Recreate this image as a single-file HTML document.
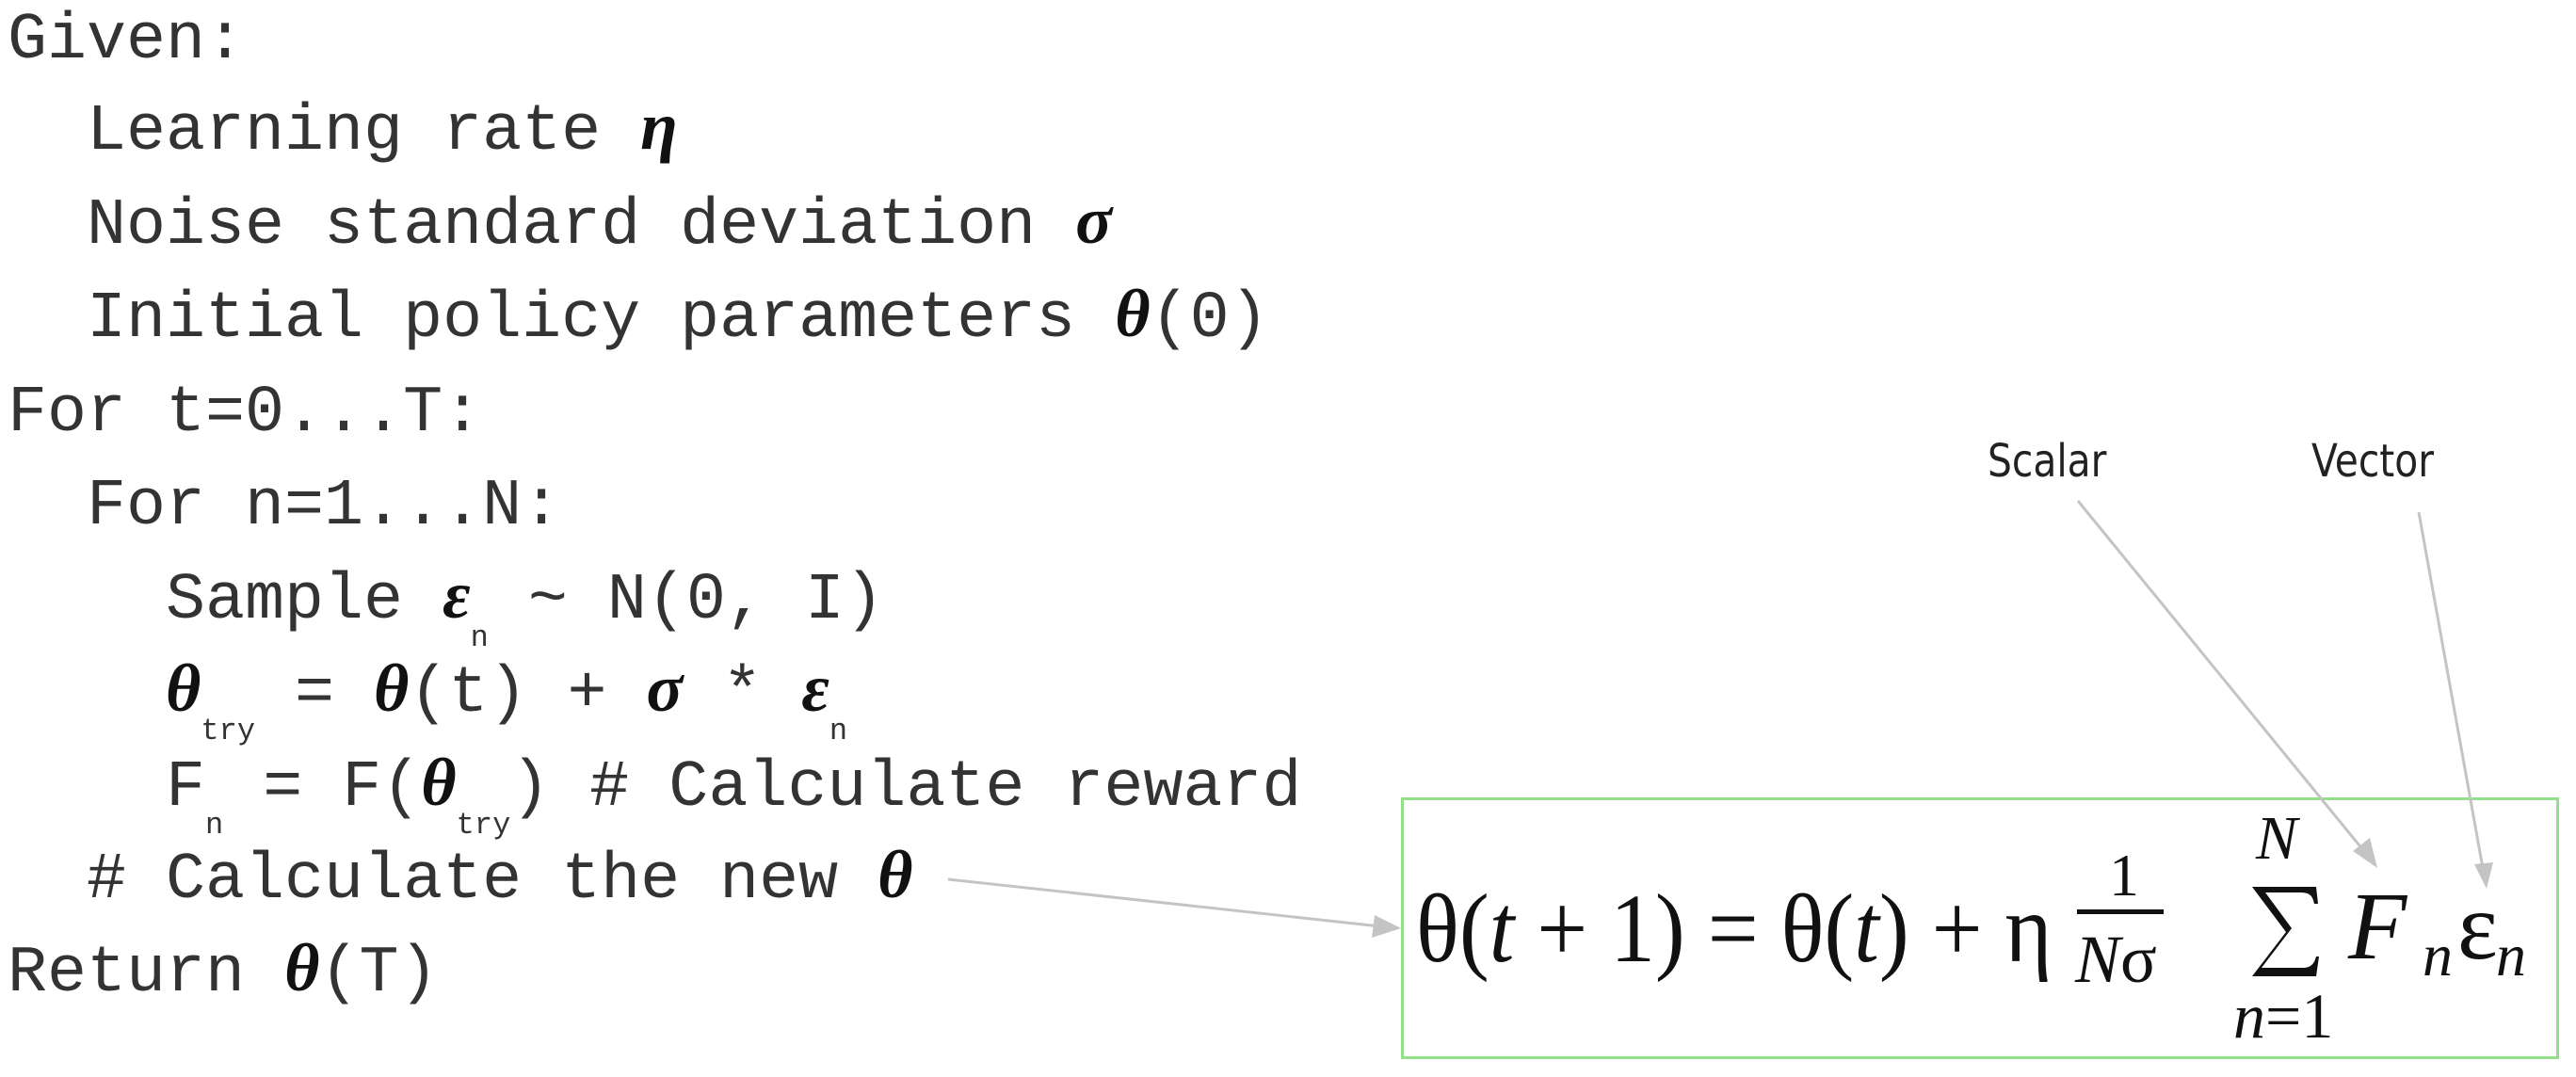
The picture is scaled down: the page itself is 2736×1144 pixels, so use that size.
<!DOCTYPE html>
<html><head><meta charset="utf-8"><style>
html,body{margin:0;padding:0;background:#fff;}
body{width:2736px;height:1144px;position:relative;overflow:hidden;}
.l{position:absolute;font-family:"Liberation Mono",monospace;font-size:70px;line-height:100px;height:100px;color:#333;white-space:pre;}
.g{font-family:"Liberation Serif",serif;font-style:italic;font-weight:bold;font-size:72px;line-height:0;color:#111;}
.s{font-family:"Liberation Mono",monospace;font-size:32px;position:relative;top:30px;line-height:0;}
.box{position:absolute;left:1488px;top:847px;width:1230px;height:278px;border:3px solid #94e08a;box-sizing:border-box;}
.f{position:absolute;font-family:"Liberation Serif",serif;color:#111;white-space:pre;line-height:1;}
.lbl{position:absolute;font-family:"DejaVu Sans","Liberation Sans",sans-serif;font-size:48px;color:#222;transform:scaleX(0.85);transform-origin:left;}
</style></head><body>
<div class="l" style="left:8px;top:-6px">Given:</div>
<div class="l" style="left:8px;top:91px">  Learning rate <span class="g">η</span></div>
<div class="l" style="left:8px;top:191px">  Noise standard deviation <span class="g">σ</span></div>
<div class="l" style="left:8px;top:290px">  Initial policy parameters <span class="g">θ</span>(0)</div>
<div class="l" style="left:8px;top:390px">For t=0...T:</div>
<div class="l" style="left:8px;top:489px">  For n=1...N:</div>
<div class="l" style="left:8px;top:589px">    Sample <span class="g">ε</span><span class="s">n</span> ~ N(0, I)</div>
<div class="l" style="left:8px;top:688px">    <span class="g">θ</span><span class="s">try</span> = <span class="g">θ</span>(t) + <span class="g">σ</span> * <span class="g">ε</span><span class="s">n</span></div>
<div class="l" style="left:8px;top:788px">    F<span class="s">n</span> = F(<span class="g">θ</span><span class="s">try</span>) # Calculate reward</div>
<div class="l" style="left:8px;top:886px">  # Calculate the new <span class="g">θ</span></div>
<div class="l" style="left:8px;top:985px">Return <span class="g">θ</span>(T)</div>

<div class="box"></div>
<div class="f" style="left:1504px;top:935px;font-size:104px;transform:scaleX(0.92);transform-origin:left;">θ(<i>t</i> + 1) = θ(<i>t</i>) + η</div>
<div class="f" style="left:2240px;top:898px;font-size:64px;">1</div>
<div style="position:absolute;left:2206px;top:966px;width:92px;height:5px;background:#111;"></div>
<div class="f" style="left:2204px;top:983px;font-size:72px;"><i>N</i>σ</div>
<div class="f" style="left:2396px;top:858px;font-size:66px;"><i>N</i></div>
<svg style="position:absolute;left:2390px;top:940px" width="74" height="100"><path d="M2,2 L70,2 L72,20 L68,20 C66,10 62,8 52,8 L16,8 L44,46 L12,88 L56,88 C64,88 68,84 70,76 L73,76 L70,97 L2,97 L38,50 Z" fill="#111"/></svg>
<div class="f" style="left:2372px;top:1045px;font-size:68px;"><i>n</i>=1</div>
<div class="f" style="left:2494px;top:934px;font-size:102px;"><i>F</i></div>
<div class="f" style="left:2573px;top:983px;font-size:64px;"><i>n</i></div>
<div class="f" style="left:2610px;top:934px;font-size:102px;">ε</div>
<div class="f" style="left:2651px;top:983px;font-size:64px;"><i>n</i></div>

<div class="lbl" style="left:2111px;top:462px;">Scalar</div>
<div class="lbl" style="left:2455px;top:462px;">Vector</div>

<svg style="position:absolute;left:0;top:0" width="2736" height="1144">
<g stroke="#c4c4c4" stroke-width="3" fill="none">
<line x1="1007" y1="934" x2="1466" y2="984"/>
<line x1="2207" y1="532" x2="2510" y2="903"/>
<line x1="2569" y1="544" x2="2637" y2="922"/>
</g>
<g fill="#c4c4c4">
<path d="M1488,986 L1460,972 L1457,996 z"/>
<path d="M2525,922 L2499,904 L2517,890 z"/>
<path d="M2641,944 L2628,918 L2648,916 z"/>
</g>
</svg>
</body></html>
